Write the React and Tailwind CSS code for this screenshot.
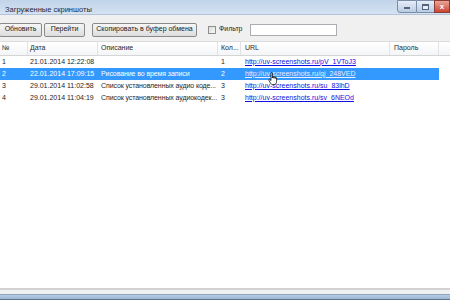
const rows = [
  { n: '1', date: '21.01.2014 12:22:08', desc: '', count: '1', url: 'http://uv-screenshots.ru/pV_1VToJ3' },
  { n: '2', date: '22.01.2014 17:09:15', desc: 'Рисование во время записи', count: '2', url: 'http://uv-screenshots.ru/qj_248VED', selected: true },
  { n: '3', date: '29.01.2014 11:02:58', desc: 'Список установленных аудио коде...', count: '3', url: 'http://uv-screenshots.ru/su_83lhD' },
  { n: '4', date: '29.01.2014 11:04:19', desc: 'Список установленных аудиокодек...', count: '3', url: 'http://uv-screenshots.ru/sv_6NEOd' },
]

function Button({ children, className }) {
  return (
    <div className={`h-[14px] flex items-center justify-center border border-[#8a8a8a] rounded-[2px] bg-gradient-to-b from-[#f6f6f6] to-[#dddddd] text-[#1a1a1a] ${className}`}>
      {children}
    </div>
  )
}

function HandCursor() {
  return (
    <svg width="11" height="14" viewBox="0 0 11 14" className="absolute left-[268px] top-[72px]">
      <path
        d="M3 1.2 C3 0.5 4.4 0.5 4.4 1.2 V6 V4.8 C4.4 4.1 5.8 4.1 5.8 4.8 V6.2 V5.3 C5.8 4.6 7.2 4.6 7.2 5.3 V6.6 V6 C7.2 5.3 8.6 5.3 8.6 6 V9.6 C8.6 11.3 7.6 12.6 6.2 12.6 H4.6 C3.6 12.6 3 12 2.4 11 L0.8 8.2 C0.4 7.5 1.3 6.9 1.9 7.5 L3 8.6 Z"
        fill="#ffffff"
        stroke="#111111"
        strokeWidth="0.8"
        strokeLinejoin="round"
      />
    </svg>
  )
}

export default function App() {
  return (
    <div className="relative w-[450px] h-[300px] overflow-hidden flex flex-col bg-white font-['Liberation_Sans',Arial,sans-serif] text-[7px] text-[#1e1e1e]">
      {/* title bar */}
      <div className="h-[15px] flex items-start bg-gradient-to-b from-[#c2d4ea] to-[#d4e2f2] border-b border-[#b3c4d8]">
        <div className="pl-[5px] pt-[4px] text-[7.5px] text-[#1b2a3d]">Загруженные скриншоты</div>
        <div className="ml-auto flex h-[13px]">
          <div className="w-[20px] border border-[#7a8ca6] rounded-bl-[3px] bg-gradient-to-b from-[#e6eef8] to-[#b9cbe2] flex items-end justify-center pb-[3px]">
            <div className="w-[6px] h-[2px] bg-white border border-[#55647a]" />
          </div>
          <div className="w-[17px] border-y border-[#7a8ca6] bg-gradient-to-b from-[#e6eef8] to-[#b9cbe2] flex items-center justify-center">
            <div className="w-[7px] h-[6px] border border-[#55647a] border-t-2 bg-white/60" />
          </div>
          <div className="w-[16px] border border-[#8a3a30] bg-gradient-to-b from-[#e9a597] to-[#c9432f] flex items-center justify-center text-white text-[8px] font-bold leading-none">
            x
          </div>
        </div>
      </div>

      {/* toolbar */}
      <div className="h-[26px] bg-[#f0f0f0] flex items-center pt-[3px]">
        <Button className="w-[43px] ml-[-1px]">Обновить</Button>
        <Button className="w-[41px] ml-[2px]">Перейти</Button>
        <Button className="w-[105px] ml-[7px]">Скопировать в буфер обмена</Button>
        <div className="ml-[11px] w-[8px] h-[8px] border border-[#8e8f8f] bg-gradient-to-br from-[#dcdcdc] to-[#f8f8f8]" />
        <span className="ml-[3px]">Фильтр</span>
        <div className="ml-[7px] w-[87px] h-[12px] bg-white border border-[#abadb3]" />
      </div>

      {/* list */}
      <div className="flex h-[15px] bg-gradient-to-b from-white to-[#f4f5f7] border-t border-[#dcdcdc] border-b border-b-[#d5d5d5] text-[#2a2a2a]">
        <div className="w-[28px] pl-[2px] flex items-center border-r border-[#e3e3e3]">№</div>
        <div className="w-[70px] pl-[2px] flex items-center border-r border-[#e3e3e3]">Дата</div>
        <div className="w-[120px] pl-[3px] flex items-center border-r border-[#e3e3e3]">Описание</div>
        <div className="w-[23px] pl-[3px] flex items-center border-r border-[#e3e3e3]">Кол...</div>
        <div className="w-[149px] pl-[4px] flex items-center border-r border-[#e3e3e3]">URL</div>
        <div className="w-[49px] pl-[4px] flex items-center border-r border-[#e3e3e3]">Пароль</div>
      </div>
      <div className="flex flex-col">
        {rows.map((r) => (
          <div key={r.n} className={`flex w-[439px] h-[12px] items-center whitespace-nowrap ${r.selected ? 'bg-[#3399ff] text-white' : ''}`}>
            <div className="w-[28px] shrink-0 pl-[2px]">{r.n}</div>
            <div className="w-[70px] shrink-0 pl-[2px]">{r.date}</div>
            <div className="w-[120px] shrink-0 pl-[3px] tracking-[-0.1px]">{r.desc}</div>
            <div className="w-[23px] shrink-0 pl-[3px]">{r.count}</div>
            <div className={`w-[149px] shrink-0 pl-[4px] underline ${r.selected ? 'text-[#e8eefc]' : 'text-[#1010e0]'}`}>{r.url}</div>
            <div className="w-[49px] shrink-0" />
          </div>
        ))}
      </div>
      <div className="flex-1" />

      {/* bottom frame */}
      <div className="h-[2px] bg-[#d2d2d2]" />
      <div className="h-[4px] bg-[#f0f0f0]" />
      <div className="h-[1px] bg-[#8da3bf]" />
      <div className="h-[4px] bg-gradient-to-b from-[#b7cce4] to-[#9fb6d2]" />
      <div className="h-[1px] bg-[#5d7392]" />

      <HandCursor />
    </div>
  )
}
